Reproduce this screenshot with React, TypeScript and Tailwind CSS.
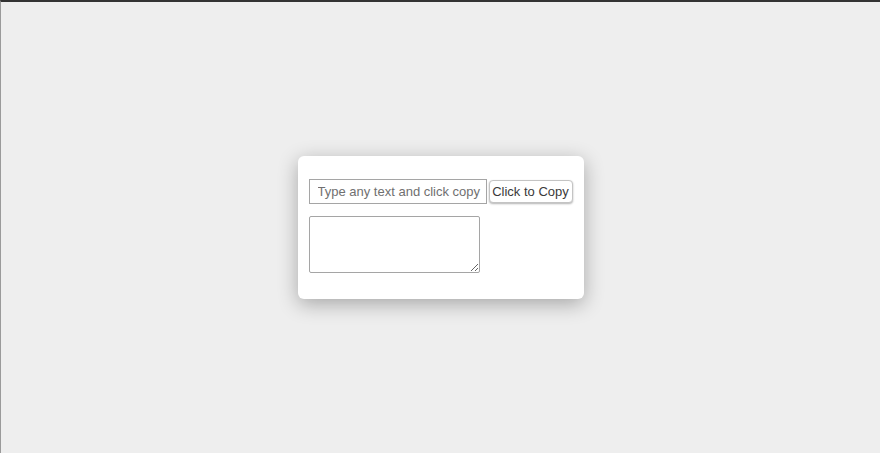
import { useState } from "react";

export default function App() {
  const [text, setText] = useState("");
  const [copied, setCopied] = useState("");

  return (
    <div className="flex h-[453px] w-full items-center justify-center border-t-2 border-l border-t-[#333333] border-l-[#9a9a9a] bg-[#eeeeee] font-['Liberation_Sans',Arial,sans-serif]">
      <div className="w-[286px] h-[143px] rounded-[6px] bg-white px-[11px] pt-[23px] shadow-[0_5px_20px_rgba(0,0,0,0.3)]">
        <div className="flex items-center gap-[2px]">
          <input
            type="text"
            value={text}
            onChange={(e) => setText(e.target.value)}
            placeholder="Type any text and click copy"
            className="h-[25px] w-[178px] border border-[#a5a5a5] bg-white pl-[8px] pr-[2px] text-[13px] text-[#333] placeholder:text-[#707070] outline-none"
          />
          <button
            onClick={() => setCopied(text)}
            className="h-[23px] w-[85px] rounded-[4px] border border-[#c4c4c4] bg-white text-[13px] text-[#3a3a3a] shadow-[0_1px_2px_rgba(0,0,0,0.3)]"
          >
            Click to Copy
          </button>
        </div>
        <textarea
          value={copied}
          onChange={(e) => setCopied(e.target.value)}
          className="mt-[12px] block h-[57px] w-[171px] rounded-[2px] border border-[#a5a5a5] bg-white p-[2px] text-[13px] outline-none"
        />
      </div>
    </div>
  );
}
